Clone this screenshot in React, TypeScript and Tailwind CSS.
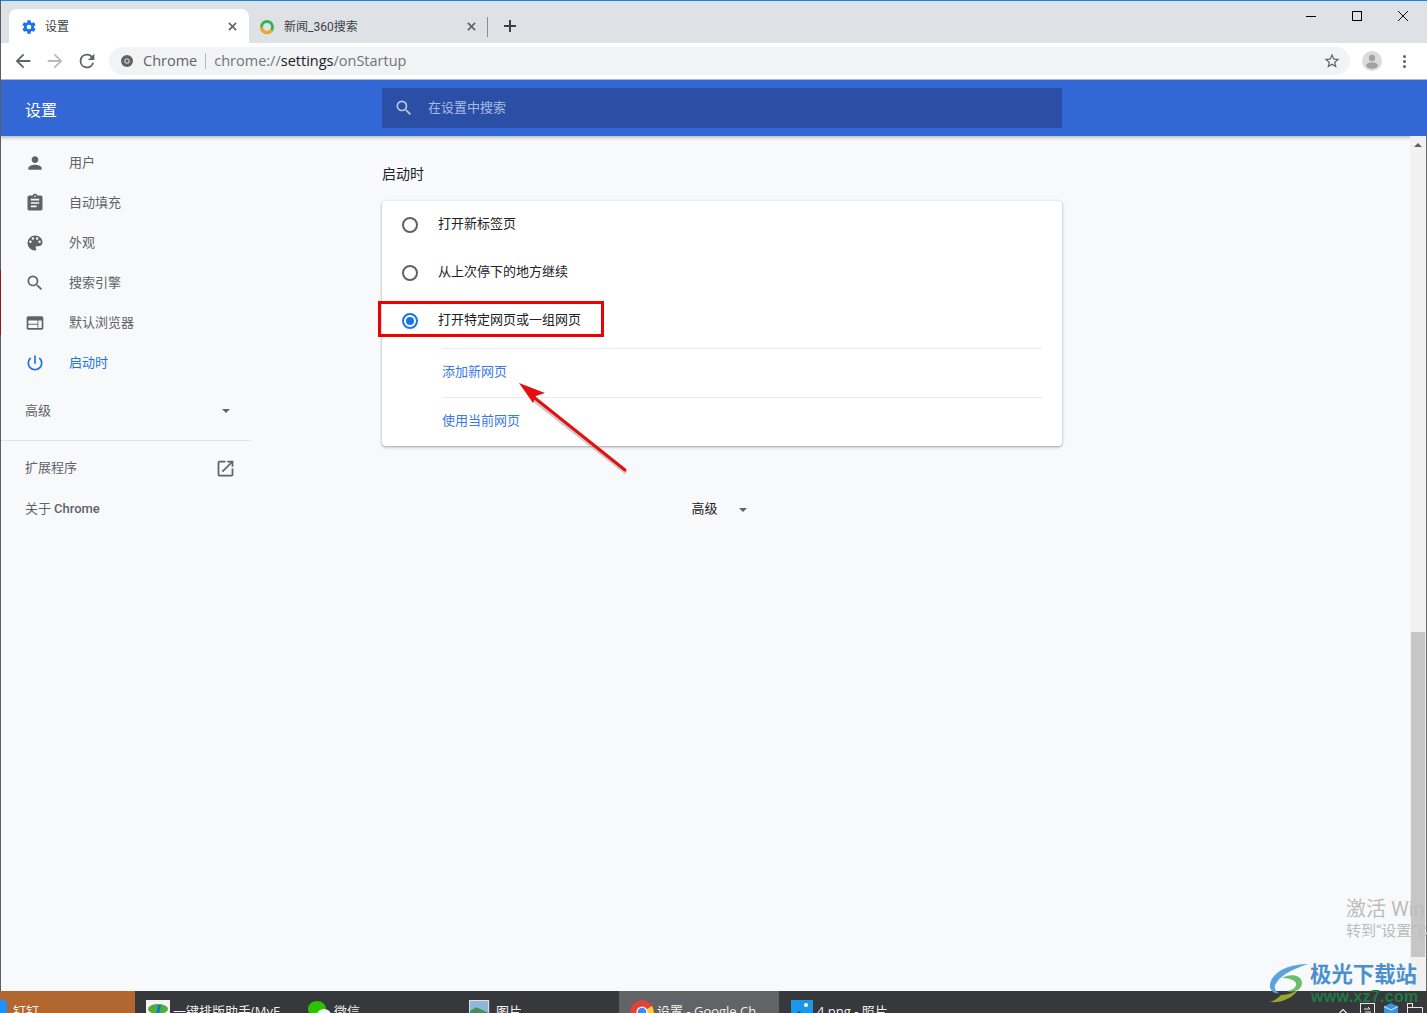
import React from "react";

const CJK = "font-['Roboto','Noto_Sans_CJK_SC',sans-serif]";

function Ico({ d, className }: { d: string; className?: string }) {
  return (
    <svg viewBox="0 0 24 24" className={className} fill="currentColor">
      <path d={d} />
    </svg>
  );
}

const P = {
  person: "M12 12c2.21 0 4-1.79 4-4s-1.79-4-4-4-4 1.79-4 4 1.79 4 4 4zm0 2c-2.67 0-8 1.34-8 4v2h16v-2c0-2.66-5.33-4-8-4z",
  clipboard: "M19 3h-4.18C14.4 1.84 13.3 1 12 1s-2.4.84-2.82 2H5c-1.1 0-2 .9-2 2v14c0 1.1.9 2 2 2h14c1.1 0 2-.9 2-2V5c0-1.1-.9-2-2-2zm-7 0c.55 0 1 .45 1 1s-.45 1-1 1-1-.45-1-1 .45-1 1-1zm2 14H7v-2h7v2zm3-4H7v-2h10v2zm0-4H7V7h10v2z",
  palette: "M12 3a9 9 0 0 0 0 18c.83 0 1.5-.67 1.5-1.5 0-.39-.15-.74-.39-1.01-.23-.26-.38-.61-.38-.99 0-.83.67-1.5 1.5-1.5H16c2.76 0 5-2.24 5-5 0-4.42-4.03-8-9-8zm-5.5 9a1.5 1.5 0 1 1 0-3 1.5 1.5 0 0 1 0 3zm3-4a1.5 1.5 0 1 1 0-3 1.5 1.5 0 0 1 0 3zm5 0a1.5 1.5 0 1 1 0-3 1.5 1.5 0 0 1 0 3zm3 4a1.5 1.5 0 1 1 0-3 1.5 1.5 0 0 1 0 3z",
  search: "M15.5 14h-.79l-.28-.27A6.47 6.47 0 0 0 16 9.5 6.5 6.5 0 1 0 9.5 16c1.61 0 3.09-.59 4.23-1.57l.27.28v.79l5 4.99L20.49 19l-4.99-5zm-6 0C7.01 14 5 11.99 5 9.5S7.01 5 9.5 5 14 7.01 14 9.5 11.99 14 9.5 14z",
  browser: "M20 4H4c-1.1 0-2 .9-2 2v12c0 1.1.9 2 2 2h16c1.1 0 2-.9 2-2V6c0-1.1-.9-2-2-2zm-5 14H4v-4h11v4zm0-5H4V9h11v4zm5 5h-4V9h4v9z",
  power: "M13 3h-2v10h2V3zm4.83 2.17l-1.42 1.42A6.92 6.92 0 0 1 19 12c0 3.87-3.13 7-7 7s-7-3.13-7-7c0-2.22 1.03-4.2 2.58-5.42L6.17 5.17A8.96 8.96 0 0 0 3 12c0 4.97 4.03 9 9 9s9-4.03 9-9c0-2.74-1.23-5.18-3.17-6.83z",
  external: "M19 19H5V5h7V3H5a2 2 0 0 0-2 2v14a2 2 0 0 0 2 2h14c1.1 0 2-.9 2-2v-7h-2v7zM14 3v2h3.59l-9.83 9.83 1.41 1.41L19 6.41V10h2V3h-7z",
  gear: "M19.43 12.98c.04-.32.07-.64.07-.98s-.03-.66-.07-.98l2.11-1.65c.19-.15.24-.42.12-.64l-2-3.46c-.12-.22-.39-.3-.61-.22l-2.49 1c-.52-.4-1.08-.73-1.69-.98l-.38-2.65A.49.49 0 0 0 14 2h-4c-.25 0-.46.18-.49.42l-.38 2.65c-.61.25-1.17.59-1.69.98l-2.49-1c-.23-.09-.49 0-.61.22l-2 3.46c-.13.22-.07.49.12.64l2.11 1.65c-.04.32-.07.65-.07.98s.03.66.07.98l-2.11 1.65c-.19.15-.24.42-.12.64l2 3.46c.12.22.39.3.61.22l2.49-1c.52.4 1.08.73 1.69.98l.38 2.65c.03.24.24.42.49.42h4c.25 0 .46-.18.49-.42l.38-2.65c.61-.25 1.17-.59 1.69-.98l2.49 1c.23.09.49 0 .61-.22l2-3.46c.12-.22.07-.49-.12-.64l-2.11-1.65zM12 15.5a3.5 3.5 0 1 1 0-7 3.5 3.5 0 0 1 0 7z",
  back: "M20 11H7.83l5.59-5.59L12 4l-8 8 8 8 1.41-1.41L7.83 13H20v-2z",
  fwd: "M12 4l-1.41 1.41L16.17 11H4v2h12.17l-5.58 5.59L12 20l8-8z",
  reload: "M17.65 6.35A7.96 7.96 0 0 0 12 4a8 8 0 1 0 7.75 10h-2.08A6 6 0 1 1 12 6c1.66 0 3.14.69 4.22 1.78L13 11h7V4l-2.35 2.35z",
  star: "M22 9.24l-7.19-.62L12 2 9.19 8.63 2 9.24l5.46 4.73L5.82 21 12 17.27 18.18 21l-1.63-7.03L22 9.24zM12 15.4l-3.76 2.27 1-4.28-3.32-2.88 4.38-.38L12 6.1l1.71 4.04 4.38.38-3.32 2.88 1 4.28L12 15.4z",
};

const navItems: [string, string][] = [
  ["用户", P.person],
  ["自动填充", P.clipboard],
  ["外观", P.palette],
  ["搜索引擎", P.search],
  ["默认浏览器", P.browser],
];

function Close({ color = "#5f6368" }: { color?: string }) {
  return (
    <svg viewBox="0 0 10 10" className="w-[9px] h-[9px]" stroke={color} strokeWidth="1.8" fill="none">
      <path d="M1 1l8 8M9 1l-8 8" />
    </svg>
  );
}

function TaskItem({ icon, label, className, iconClass = "w-[24px]" }: { icon: React.ReactNode; label: string; className: string; iconClass?: string }) {
  return (
    <div className={`h-[40px] flex items-start pt-[9px] overflow-hidden ${className}`}>
      <span className={`h-[24px] shrink-0 mr-[3px] ${iconClass}`}>{icon}</span>
      <span className="-mt-[1px] text-[#f0f0f0] text-[13px] leading-[24px] whitespace-nowrap font-['Open_Sans','Noto_Sans_CJK_SC',sans-serif]">{label}</span>
    </div>
  );
}

export default function App() {
  return (
    <div className={`relative w-[1427px] h-[1013px] overflow-hidden flex flex-col bg-[#f8f9fa] ${CJK}`}>
      {/* top accent */}
      <div className="h-[1px] bg-[#1a86d9] shrink-0" />
      {/* tab strip */}
      <div className="h-[42px] bg-[#dee1e6] flex shrink-0 pl-[9px] pt-[8px]">
        <div className="w-[240px] h-[34px] bg-white rounded-t-[8px] flex items-center pl-[12px] pr-[12px] pt-[1px]">
          <Ico d={P.gear} className="w-[16px] h-[16px] text-[#1a73e8]" />
          <span className="ml-[8px] text-[12px] text-[#3c4043]">设置</span>
          <span className="ml-auto flex"><Close /></span>
        </div>
        <div className="w-[248px] h-[34px] flex items-center pl-[10px] pr-[9px] pt-[1px]">
          <svg viewBox="0 0 16 16" className="w-[16px] h-[16px]" fill="none" strokeWidth="3">
            <circle cx="8" cy="8" r="5.5" stroke="#2fb45a" />
            <path d="M2.5 8a5.5 5.5 0 0 0 10 3.2" stroke="#f5a623" />
          </svg>
          <span className="ml-[9px] text-[12px] text-[#3c4043] whitespace-nowrap">新闻_360搜索</span>
          <span className="ml-auto flex"><Close /></span>
          <span className="ml-[11px] w-[1px] h-[20px] bg-[#8a8d91]" />
        </div>
        <div className="ml-[7px] h-[34px] flex items-center">
          <svg viewBox="0 0 12 12" className="w-[12px] h-[12px]" stroke="#3c4043" strokeWidth="2">
            <path d="M6 0v12M0 6h12" />
          </svg>
        </div>
        <div className="ml-auto flex h-[28px] items-start -mt-[8px] pt-[8px] pr-[1px] text-black">
          <div className="w-[46px] h-[14px] flex justify-center items-center">
            <span className="w-[10px] h-[1px] bg-black" />
          </div>
          <div className="w-[46px] h-[14px] flex justify-center items-center">
            <span className="w-[10px] h-[10px] border border-black" />
          </div>
          <div className="w-[46px] h-[14px] flex justify-center items-center">
            <svg viewBox="0 0 10 10" className="w-[10px] h-[10px]" stroke="#111" strokeWidth="1" fill="none">
              <path d="M0 0l10 10M10 0L0 10" />
            </svg>
          </div>
        </div>
      </div>
      {/* toolbar */}
      <div className="h-[36px] bg-white flex items-center shrink-0 border-b border-[#b8b9bb] box-content">
        <div className="pl-[12px] flex items-center">
          <Ico d={P.back} className="w-[22px] h-[22px] text-[#5f6368]" />
          <Ico d={P.fwd} className="ml-[10px] w-[22px] h-[22px] text-[#b8babd]" />
          <Ico d={P.reload} className="ml-[10px] w-[22px] h-[22px] text-[#5f6368]" />
        </div>
        <div className="ml-[11px] w-[1241px] h-[28px] rounded-full bg-[#f1f3f4] flex items-center pl-[12px] pr-[9px]">
          <svg viewBox="0 0 12 12" className="w-[12px] h-[12px]">
            <circle cx="6" cy="6" r="6" fill="#5f6368" />
            <circle cx="6" cy="6" r="2.6" fill="#f1f3f4" />
            <circle cx="6" cy="6" r="1.8" fill="#5f6368" />
          </svg>
          <span className="ml-[10px] text-[14.5px] text-[#5f6368] font-['Open_Sans',sans-serif]">Chrome</span>
          <span className="mx-[8px] w-[1px] h-[16px] bg-[#b5b8bc]" />
          <span className="text-[14.5px] text-[#6f7478] font-['Open_Sans',sans-serif] whitespace-nowrap">
            chrome://<span className="text-[#202124]">settings</span>/onStartup
          </span>
          <Ico d={P.star} className="ml-auto w-[18px] h-[18px] text-[#5f6368]" />
        </div>
        <div className="ml-[12px] w-[20px] h-[20px] rounded-full bg-[#dcdcdc] overflow-hidden flex justify-center">
          <svg viewBox="0 0 20 20" className="w-[20px] h-[20px]" fill="#a3a3a3">
            <circle cx="10" cy="7" r="3.2" />
            <ellipse cx="10" cy="14.5" rx="6" ry="3.2" />
          </svg>
        </div>
        <div className="ml-[21px] flex flex-col gap-[2px]">
          <span className="w-[3px] h-[3px] rounded-full bg-[#5f6368]" />
          <span className="w-[3px] h-[3px] rounded-full bg-[#5f6368]" />
          <span className="w-[3px] h-[3px] rounded-full bg-[#5f6368]" />
        </div>
      </div>
      {/* settings header */}
      <div className="h-[56px] bg-[#3367d6] flex shrink-0 relative z-10 shadow-[0_2px_3px_rgba(60,64,67,0.3)]">
        <div className="w-[382px] pl-[25px] pt-[19px] text-[16px] leading-[24px] text-white">设置</div>
        <div className="mt-[8px] w-[680px] h-[40px] bg-[#2a4fa5] rounded-[1px] flex items-center pl-[12px] text-[#a7bbe6]">
          <Ico d={P.search} className="w-[20px] h-[20px] text-[#b9c9ec]" />
          <span className="ml-[14px] text-[13px]">在设置中搜索</span>
        </div>
      </div>
      {/* body */}
      <div className="flex-1 flex min-h-0 border-l border-[#5a5d61]">
        <aside className="w-[250px] shrink-0 pt-[7px] text-[#5f6368] text-[13px]">
          {navItems.map(([t, d]) => (
            <div key={t} className="h-[40px] flex items-center pl-[24px]">
              <Ico d={d} className="w-[20px] h-[20px] text-[#5f6368]" />
              <span className="ml-[24px]">{t}</span>
            </div>
          ))}
          <div className="h-[40px] flex items-center pl-[24px] text-[#1a73e8]">
            <Ico d={P.power} className="w-[20px] h-[20px]" />
            <span className="ml-[24px]">启动时</span>
          </div>
          <div className="mt-[4px] h-[48px] flex items-center pl-[24px] pr-[21px] justify-between border-b border-[#e2e3e5] box-content pb-[5px]">
            <span>高级</span>
            <span className="w-0 h-0 border-x-[4.5px] border-x-transparent border-t-[4.5px] border-t-[#5f6368]" />
          </div>
          <div className="h-[52px] flex items-center pl-[24px] pr-[15px] justify-between mt-[1px]">
            <span>扩展程序</span>
            <Ico d={P.external} className="w-[21px] h-[21px] text-[#5f6368]" />
          </div>
          <div className="mt-[1px] h-[28px] flex items-center pl-[24px]">关于 <span className="ml-[3px] font-medium">Chrome</span></div>
        </aside>
        <main className="flex-1 pl-[131px] pt-[28px] min-w-0">
          <div className="text-[14px] leading-[20px] text-[#202124]">启动时</div>
          <div className="mt-[17px] w-[680px] h-[245px] bg-white rounded-[4px] shadow-[0_1px_2px_rgba(60,64,67,0.3),0_1px_3px_1px_rgba(60,64,67,0.15)] flex flex-col text-[13px] text-[#202124]">
            {["打开新标签页", "从上次停下的地方继续"].map((t) => (
              <div key={t} className="h-[48px] flex items-center pl-[20px]">
                <span className="w-[16px] h-[16px] rounded-full border-2 border-[#5f6368]" />
                <span className="ml-[20px] pb-[2px]">{t}</span>
              </div>
            ))}
            <div className="h-[48px] mb-[3px] flex items-center pl-[20px]">
              <span className="w-[16px] h-[16px] rounded-full border-2 border-[#1a73e8] flex items-center justify-center">
                <span className="w-[8px] h-[8px] rounded-full bg-[#1a73e8]" />
              </span>
              <span className="ml-[20px] pb-[2px]">打开特定网页或一组网页</span>
            </div>
            <div className="ml-[60px] mr-[20px] h-[49px] pb-[2px] border-t border-[#e8eaed] flex items-center text-[#3b78e7]">添加新网页</div>
            <div className="ml-[60px] mr-[20px] h-[49px] pb-[2px] border-t border-[#e8eaed] flex items-center text-[#3b78e7]">使用当前网页</div>
          </div>
          <div className="mt-[51px] w-[680px] flex justify-center items-center text-[13px] text-[#202124] h-[24px] pr-[6px]">
            <span>高级</span>
            <span className="ml-[21px] mt-[2px] w-0 h-0 border-x-[4.5px] border-x-transparent border-t-[4.5px] border-t-[#5f6368]" />
          </div>
        </main>
        {/* scrollbar */}
        <div className="w-[17px] shrink-0 bg-[#f1f1f1] border-r border-[#5a5d61] flex flex-col relative z-20 opacity-90">
          <div className="h-[17px] flex justify-center items-center">
            <span className="w-0 h-0 border-x-[4px] border-x-transparent border-b-[4px] border-b-[#505050]" />
          </div>
          <div className="mt-[479px] ml-[1px] w-[14px] h-[325px] bg-[#c1c1c1]" />
        </div>
      </div>
      {/* taskbar */}
      <div className="h-[22px] shrink-0 bg-[#37383c] flex overflow-hidden relative">
        <TaskItem
          className="w-[135px] bg-[#b1672f]"
          label="钉钉"
          iconClass="w-[10px]"
          icon={<span className="block w-[7px] h-[16px] rounded-r-[4px] bg-[#1e90ff]" />}
        />
        <TaskItem
          className="w-[161px] pl-[11px]"
          label="一键排版助手(MyE"
          icon={
            <svg viewBox="0 0 24 24" className="w-[24px] h-[24px]">
              <rect width="24" height="24" fill="#f4f4f4" />
              <ellipse cx="12" cy="9" rx="10" ry="5" fill="#4fae3e" />
              <path d="M12 5l3 0-3 14h-3z" fill="#1878c8" />
            </svg>
          }
        />
        <TaskItem
          className="w-[162px] pl-[11px]"
          label="微信"
          icon={
            <svg viewBox="0 0 24 24" className="w-[24px] h-[24px]">
              <ellipse cx="10" cy="9" rx="9" ry="8" fill="#2dc100" />
              <ellipse cx="17" cy="15" rx="7" ry="6" fill="#f2f2f2" />
            </svg>
          }
        />
        <TaskItem
          className="w-[161px] pl-[11px]"
          label="图片"
          icon={
            <svg viewBox="0 0 24 24" className="w-[22px] h-[22px]">
              <rect width="22" height="22" fill="#dfe7ef" />
              <rect x="1" y="1" width="20" height="20" fill="#8fb8d8" />
              <path d="M1 12l7-4 13 6v7H1z" fill="#4b8a5a" />
            </svg>
          }
        />
        <TaskItem
          className="w-[160px] bg-[#626366] pl-[11px]"
          label="设置 - Google Ch"
          icon={
            <svg viewBox="0 0 24 24" className="w-[24px] h-[24px]">
              <circle cx="12" cy="12" r="12" fill="#db4437" />
              <path d="M12 12L2 18a12 12 0 0 0 10 6z" fill="#0f9d58" />
              <path d="M12 12l10 6a12 12 0 0 0 0-12z" fill="#ffcd40" />
              <circle cx="12" cy="12" r="5.6" fill="#f3f3f3" />
              <circle cx="12" cy="12" r="4.2" fill="#4285f4" />
            </svg>
          }
        />
        <TaskItem
          className="w-[160px] pl-[11px]"
          label="4.png - 照片"
          icon={
            <svg viewBox="0 0 24 24" className="w-[24px] h-[24px]">
              <rect width="22" height="22" x="1" fill="#1e96e8" />
              <circle cx="16" cy="5" r="2" fill="#fff" />
              <path d="M1 18l8-7 9 8v3H1z" fill="#0b4f95" />
            </svg>
          }
        />
        <div className="ml-auto flex items-start pt-[12px] pr-[4px]">
          <svg viewBox="0 0 12 7" className="mt-[5px] w-[12px] h-[7px]" fill="none" stroke="#f0f0f0" strokeWidth="1.2"><path d="M1 6.5L6 1.5l5 5" /></svg>
          <svg viewBox="0 0 15 16" className="ml-[11px] w-[15px] h-[16px]" fill="none"><rect x="0.5" y="0.5" width="14" height="15" stroke="#e8e8e8" /><path d="M4 6h6l-2-2M11 9H5" stroke="#e8e8e8" /></svg>
          <svg viewBox="0 0 14 14" className="ml-[9px] w-[14px] h-[14px]"><path d="M7 0l7 3.5v7L7 14 0 10.5v-7z" fill="#3d8fe0" /><path d="M0 3.5L7 7l7-3.5" stroke="#e8f2ff" fill="none" /></svg>
          <svg viewBox="0 0 16 10" className="ml-[9px] w-[16px] h-[10px]" fill="none" stroke="#e8e8e8"><rect x="0.5" y="0.5" width="5" height="4" /><path d="M5.5 4.5h10v6" /><path d="M0.5 4.5v6" /></svg>
        </div>
      </div>

      {/* desktop showing through at the window's left edge */}
      <span className="absolute left-0 top-0 w-[1px] h-[991px] bg-[#5a5d61] z-30" />
      <span className="absolute left-0 top-[270px] w-[1px] h-[65px] bg-[#8b1a1a] z-30" />

      {/* activation watermark */}
      <div className="absolute left-[1346px] top-[896px] whitespace-nowrap text-[#bcbcbc] z-30">
        <div className="text-[20px] leading-[26px]">激活 Win</div>
        <div className="text-[15px] leading-[20px] -mt-[1px]">转到“设置”以</div>
      </div>

      {/* red highlight box and arrow */}
      <div className="absolute left-[378px] top-[301px] w-[226px] h-[36px] border-[3px] border-[#ee0000]" />
      <svg className="absolute left-[505px] top-[370px] w-[130px] h-[110px]" viewBox="0 0 130 110" fill="none">
        <path d="M120 101L27 28" stroke="#999" strokeWidth="3" opacity="0.5" transform="translate(1 2)" />
        <path d="M120 100L26 25" stroke="#e60f0f" strokeWidth="3" strokeLinecap="round" />
        <path d="M14 13L40 23 L31 26 L28 33z" fill="#e60f0f" />
      </svg>

      {/* site watermark */}
      <div className="absolute left-[1268px] top-[962px] flex z-30">
        <svg viewBox="0 0 42 42" className="w-[42px] h-[42px]" fill="none">
          <path d="M40 2C24 2 5 8 2 22c-1 7 5 10 9 9-4-2-6-6-2-11C14 12 28 6 40 2z" fill="#5ba3dc" />
          <path d="M14 16c8-5 20-3 20 5 0 7-9 10-15 8 6-1 10-4 9-8-1-3-8-5-14-5z" fill="#6cbf6a" />
          <path d="M2 40c10 1 22-3 28-12-5 3-12 5-17 5-3 3-7 6-11 7z" fill="#9aa82e" />
        </svg>
        <div className="-mt-[2px]">
          <div className="text-[21.4px] leading-[26px] font-bold text-[#4a90cf] font-['Noto_Sans_CJK_SC',sans-serif] whitespace-nowrap">极光下载站</div>
          <div className="text-[16px] leading-[22px] font-bold text-[#1d7a45] font-['Liberation_Sans',sans-serif] tracking-[0.3px] ml-[1px] whitespace-nowrap">www.xz7.com</div>
        </div>
      </div>
    </div>
  );
}
